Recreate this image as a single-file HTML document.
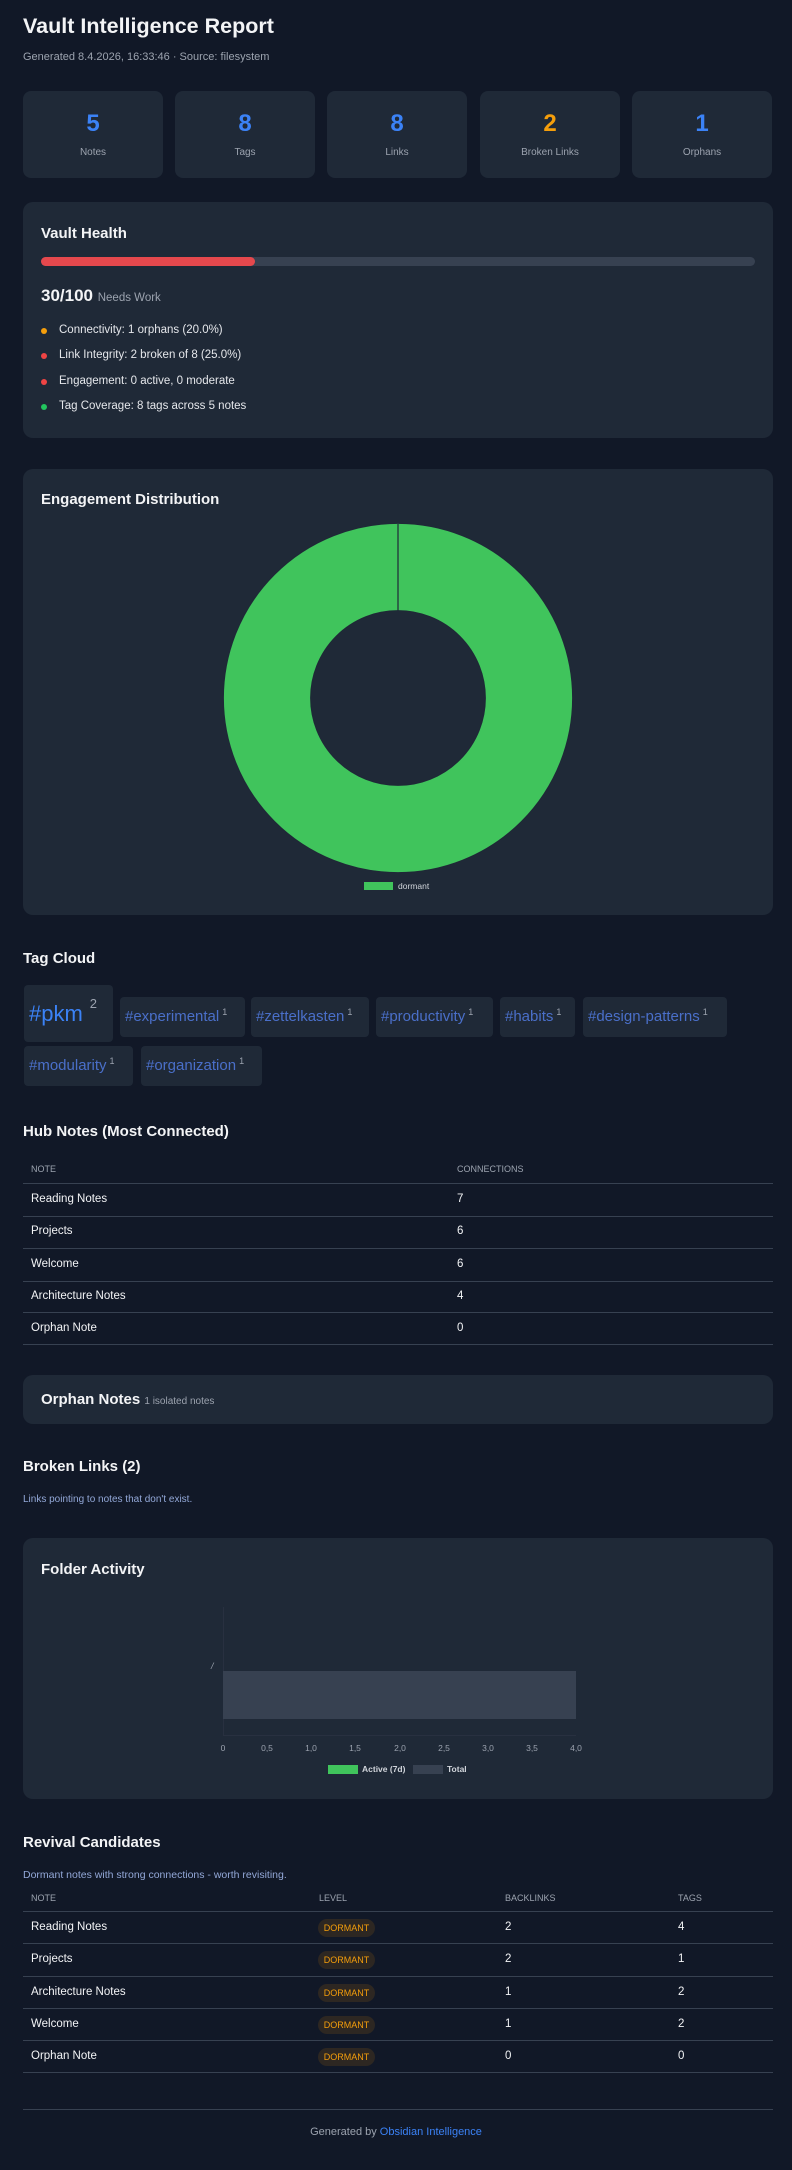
<!DOCTYPE html>
<html><head><meta charset="utf-8"><style>
*{box-sizing:border-box;margin:0;padding:0}
body{width:792px;height:2170px;background:#111827;font-family:"Liberation Sans",Arial,sans-serif;color:#e5e7eb;position:relative;overflow:hidden}
.a{position:absolute}
.card{position:absolute;background:#1f2937;border-radius:10px}
h1{font-size:21.5px;font-weight:bold;color:#f3f4f6}
.h2{font-size:15px;font-weight:bold;color:#f3f4f6}
.muted{color:#9ca3af}
.stat{position:absolute;top:91px;height:87px;width:140px;background:#1f2937;border-radius:8px;text-align:center}
.stat .n{font-size:24px;font-weight:bold;color:#3b82f6;margin-top:19px;line-height:28px}
.stat .l{font-size:10px;color:#9ca3af;margin-top:9px}
.li{position:absolute;left:41px;font-size:11.5px;color:#e5e7eb}
.li i{position:absolute;left:0;top:-4px;width:6px;height:6px;border-radius:3px}
.li span{position:absolute;left:18px;top:-8px;white-space:nowrap}
.tag{position:absolute;background:#1f2937;border-radius:4px;color:#4a6fc9;font-size:15px;padding-left:5px;white-space:nowrap}
.tag sup{font-size:9px;color:#9ca3af;vertical-align:top;position:relative;top:-5px;margin-left:3px}
.hl{position:absolute;left:23px;width:750px;height:1px;background:#374151}
.td{position:absolute;font-size:11.5px;color:#f3f4f6;white-space:nowrap}
.th{position:absolute;font-size:9px;color:#9ca3af;white-space:nowrap}
.badge{position:absolute;left:318px;width:57px;height:18px;border-radius:9px;background:#2d2722;color:#f59e0b;font-size:9px;text-align:center;line-height:18px}
.ax{position:absolute;top:1743px;font-size:8.5px;color:#9ca3af;transform:translateX(-50%)}
</style></head><body>
<h1 class="a" style="left:23px;top:14px">Vault Intelligence Report</h1>
<div class="a muted" style="left:23px;top:51px;font-size:11px">Generated 8.4.2026, 16:33:46 · Source: filesystem</div>

<div class="stat" style="left:23px"><div class="n">5</div><div class="l">Notes</div></div>
<div class="stat" style="left:175px"><div class="n">8</div><div class="l">Tags</div></div>
<div class="stat" style="left:327px"><div class="n">8</div><div class="l">Links</div></div>
<div class="stat" style="left:480px"><div class="n" style="color:#f59e0b">2</div><div class="l">Broken Links</div></div>
<div class="stat" style="left:632px"><div class="n">1</div><div class="l">Orphans</div></div>

<div class="card" style="left:23px;top:202px;width:750px;height:236px"></div>
<div class="a h2" style="left:41px;top:225px">Vault Health</div>
<div class="a" style="left:41px;top:257px;width:714px;height:9px;border-radius:5px;background:#374151"></div>
<div class="a" style="left:41px;top:257px;width:214px;height:9px;border-radius:5px;background:#e5484d"></div>
<div class="a" style="left:41px;top:286px;font-size:17px;font-weight:bold;color:#f3f4f6">30/100 <span style="font-size:11.5px;font-weight:normal;color:#9ca3af">Needs Work</span></div>
<div class="li" style="top:332px"><i style="background:#f59e0b"></i><span>Connectivity: 1 orphans (20.0%)</span></div>
<div class="li" style="top:357px"><i style="background:#ef4444"></i><span>Link Integrity: 2 broken of 8 (25.0%)</span></div>
<div class="li" style="top:383px"><i style="background:#ef4444"></i><span>Engagement: 0 active, 0 moderate</span></div>
<div class="li" style="top:408px"><i style="background:#22c55e"></i><span>Tag Coverage: 8 tags across 5 notes</span></div>

<div class="card" style="left:23px;top:469px;width:750px;height:446px"></div>
<div class="a h2" style="left:41px;top:491px">Engagement Distribution</div>
<svg class="a" style="left:0;top:0" width="792" height="920">
<circle cx="398" cy="698" r="131" fill="none" stroke="#40c45c" stroke-width="87"/>
<circle cx="398" cy="698" r="174.5" fill="none" stroke="#1f2937" stroke-width="0.8"/>
<circle cx="398" cy="698" r="87.5" fill="none" stroke="#1f2937" stroke-width="0.8"/>
<line x1="398" y1="524" x2="398" y2="611" stroke="#1f2937" stroke-width="1.2"/>
<rect x="364" y="882" width="29" height="8" fill="#40c45c"/>
<text x="398" y="889" font-size="8.5" fill="#d1d5db" font-family="Liberation Sans">dormant</text>
</svg>

<div class="a h2" style="left:23px;top:950px">Tag Cloud</div>
<div class="tag" style="left:24px;top:985px;width:89px;height:57px;font-size:22px;line-height:57px;color:#3b82f6">#pkm<sup style="font-size:13px;top:-10px;margin-left:7px">2</sup></div>
<div class="tag" style="left:120px;top:997px;width:125px;height:40px;line-height:40px">#experimental<sup>1</sup></div>
<div class="tag" style="left:251px;top:997px;width:118px;height:40px;line-height:40px">#zettelkasten<sup>1</sup></div>
<div class="tag" style="left:376px;top:997px;width:117px;height:40px;line-height:40px">#productivity<sup>1</sup></div>
<div class="tag" style="left:500px;top:997px;width:75px;height:40px;line-height:40px">#habits<sup>1</sup></div>
<div class="tag" style="left:583px;top:997px;width:144px;height:40px;line-height:40px">#design-patterns<sup>1</sup></div>
<div class="tag" style="left:24px;top:1046px;width:109px;height:40px;line-height:40px">#modularity<sup>1</sup></div>
<div class="tag" style="left:141px;top:1046px;width:121px;height:40px;line-height:40px">#organization<sup>1</sup></div>

<div class="a h2" style="left:23px;top:1123px">Hub Notes (Most Connected)</div>
<div class="th" style="left:31px;top:1164px">NOTE</div><div class="th" style="left:457px;top:1164px">CONNECTIONS</div>
<div class="hl" style="top:1183px"></div>
<div class="td" style="left:31px;top:1193px">Reading Notes</div><div class="td" style="left:457px;top:1193px">7</div>
<div class="hl" style="top:1216px"></div>
<div class="td" style="left:31px;top:1225px">Projects</div><div class="td" style="left:457px;top:1225px">6</div>
<div class="hl" style="top:1248px"></div>
<div class="td" style="left:31px;top:1258px">Welcome</div><div class="td" style="left:457px;top:1258px">6</div>
<div class="hl" style="top:1281px"></div>
<div class="td" style="left:31px;top:1290px">Architecture Notes</div><div class="td" style="left:457px;top:1290px">4</div>
<div class="hl" style="top:1312px"></div>
<div class="td" style="left:31px;top:1322px">Orphan Note</div><div class="td" style="left:457px;top:1322px">0</div>
<div class="hl" style="top:1344px"></div>

<div class="card" style="left:23px;top:1375px;width:750px;height:49px"></div>
<div class="a h2" style="left:41px;top:1391px">Orphan Notes <span style="font-size:10px;font-weight:normal;color:#9ca3af">1 isolated notes</span></div>

<div class="a h2" style="left:23px;top:1458px">Broken Links (2)</div>
<div class="a" style="left:23px;top:1494px;font-size:10px;color:#93a8d8">Links pointing to notes that don't exist.</div>

<div class="card" style="left:23px;top:1538px;width:750px;height:261px"></div>
<div class="a h2" style="left:41px;top:1561px">Folder Activity</div>
<div class="a" style="left:223px;top:1607px;width:1px;height:128px;background:#283040"></div>
<div class="a" style="left:223px;top:1735px;width:353px;height:1px;background:#283040"></div>
<div class="a" style="left:223px;top:1671px;width:353px;height:48px;background:#374151"></div>
<div class="a" style="left:211px;top:1661px;font-size:9px;color:#9ca3af;font-style:italic">/</div>
<div class="ax" style="left:223px">0</div><div class="ax" style="left:267px">0,5</div><div class="ax" style="left:311px">1,0</div><div class="ax" style="left:355px">1,5</div><div class="ax" style="left:400px">2,0</div><div class="ax" style="left:444px">2,5</div><div class="ax" style="left:488px">3,0</div><div class="ax" style="left:532px">3,5</div><div class="ax" style="left:576px">4,0</div>
<div class="a" style="left:328px;top:1765px;width:30px;height:9px;background:#40c45c"></div>
<div class="a" style="left:362px;top:1764px;font-size:8.5px;color:#d1d5db;font-weight:bold">Active (7d)</div>
<div class="a" style="left:413px;top:1765px;width:30px;height:9px;background:#374151"></div>
<div class="a" style="left:447px;top:1764px;font-size:8.5px;color:#d1d5db;font-weight:bold">Total</div>

<div class="a h2" style="left:23px;top:1834px">Revival Candidates</div>
<div class="a" style="left:23px;top:1869px;font-size:10.5px;color:#93a8d8">Dormant notes with strong connections - worth revisiting.</div>
<div class="th" style="left:31px;top:1893px">NOTE</div><div class="th" style="left:319px;top:1893px">LEVEL</div><div class="th" style="left:505px;top:1893px">BACKLINKS</div><div class="th" style="left:678px;top:1893px">TAGS</div>
<div class="hl" style="top:1911px"></div>
<div class="td" style="left:31px;top:1921px">Reading Notes</div><div class="badge" style="top:1919px">DORMANT</div><div class="td" style="left:505px;top:1921px">2</div><div class="td" style="left:678px;top:1921px">4</div>
<div class="hl" style="top:1943px"></div>
<div class="td" style="left:31px;top:1953px">Projects</div><div class="badge" style="top:1951px">DORMANT</div><div class="td" style="left:505px;top:1953px">2</div><div class="td" style="left:678px;top:1953px">1</div>
<div class="hl" style="top:1976px"></div>
<div class="td" style="left:31px;top:1986px">Architecture Notes</div><div class="badge" style="top:1984px">DORMANT</div><div class="td" style="left:505px;top:1986px">1</div><div class="td" style="left:678px;top:1986px">2</div>
<div class="hl" style="top:2008px"></div>
<div class="td" style="left:31px;top:2018px">Welcome</div><div class="badge" style="top:2016px">DORMANT</div><div class="td" style="left:505px;top:2018px">1</div><div class="td" style="left:678px;top:2018px">2</div>
<div class="hl" style="top:2040px"></div>
<div class="td" style="left:31px;top:2050px">Orphan Note</div><div class="badge" style="top:2048px">DORMANT</div><div class="td" style="left:505px;top:2050px">0</div><div class="td" style="left:678px;top:2050px">0</div>
<div class="hl" style="top:2072px"></div>

<div class="hl" style="top:2109px"></div>
<div class="a" style="left:0;width:792px;top:2126px;text-align:center;font-size:11px;color:#9ca3af">Generated by <span style="color:#3b82f6">Obsidian Intelligence</span></div>
</body></html>
